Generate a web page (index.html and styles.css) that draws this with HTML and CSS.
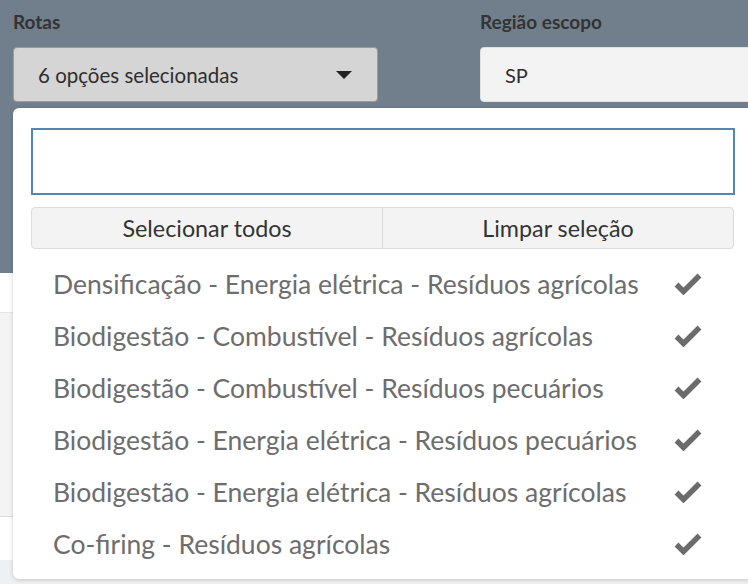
FILE: index.html
```html
<!DOCTYPE html>
<html lang="pt-BR">
<head>
<meta charset="utf-8">
<title>Rotas</title>
<link rel="stylesheet" href="styles.css">
</head>
<body>
  <header class="filters">
    <div class="field field-rotas">
      <label class="field-label">Rotas</label>
      <button class="select-btn" type="button">
        <span class="select-text">6 opções selecionadas</span>
        <span class="caret"></span>
      </button>
    </div>
    <div class="field field-regiao">
      <label class="field-label">Região escopo</label>
      <div class="text-input">SP</div>
    </div>
  </header>

  <main class="content">
    <div class="band band-white"></div>
    <div class="band band-grey"></div>
    <div class="band band-white2"></div>
    <div class="band band-foot"></div>
  </main>

  <div class="dropdown">
    <div class="search-box"></div>
    <div class="actions">
      <button class="action-btn" type="button">Selecionar todos</button>
      <button class="action-btn" type="button">Limpar seleção</button>
    </div>
    <ul class="options">
      <li class="option"><span>Densificação - Energia elétrica - Resíduos agrícolas</span><svg class="check" viewBox="0 0 28 22"><path d="M2.5 11.5 L9.5 18.5 L25.5 2.5"/></svg></li>
      <li class="option"><span>Biodigestão - Combustível - Resíduos agrícolas</span><svg class="check" viewBox="0 0 28 22"><path d="M2.5 11.5 L9.5 18.5 L25.5 2.5"/></svg></li>
      <li class="option"><span>Biodigestão - Combustível - Resíduos pecuários</span><svg class="check" viewBox="0 0 28 22"><path d="M2.5 11.5 L9.5 18.5 L25.5 2.5"/></svg></li>
      <li class="option"><span>Biodigestão - Energia elétrica - Resíduos pecuários</span><svg class="check" viewBox="0 0 28 22"><path d="M2.5 11.5 L9.5 18.5 L25.5 2.5"/></svg></li>
      <li class="option"><span>Biodigestão - Energia elétrica - Resíduos agrícolas</span><svg class="check" viewBox="0 0 28 22"><path d="M2.5 11.5 L9.5 18.5 L25.5 2.5"/></svg></li>
      <li class="option"><span>Co-firing - Resíduos agrícolas</span><svg class="check" viewBox="0 0 28 22"><path d="M2.5 11.5 L9.5 18.5 L25.5 2.5"/></svg></li>
    </ul>
  </div>
</body>
</html>
```
FILE: styles.css
```css
* { box-sizing: border-box; }

html, body {
  margin: 0;
  padding: 0;
  width: 748px;
  height: 584px;
  overflow: hidden;
  font-family: "Lato", "Liberation Sans", sans-serif;
  color: #333;
}

body { position: relative; background: #eef1f4; }

.filters {
  height: 273px;
  background: #717f8d;
  display: flex;
  gap: 102px;
  padding: 10px 0 0 13px;
}

.field { display: flex; flex-direction: column; flex: 0 0 365px; }

.field-label {
  font-weight: 700;
  font-size: 19px;
  line-height: 23px;
  color: #333;
  margin-bottom: 14px;
}

.select-btn {
  height: 55px;
  display: flex;
  align-items: center;
  justify-content: space-between;
  padding: 0 25px 0 24px;
  background: #d5d5d5;
  border: 1px solid #9b9b9b;
  border-radius: 4px;
  font-family: inherit;
  font-size: 20.5px;
  color: #2e2e2e;
}

.caret {
  width: 0;
  height: 0;
  border-left: 8px solid transparent;
  border-right: 8px solid transparent;
  border-top: 8px solid #222;
}

.text-input {
  height: 55px;
  display: flex;
  align-items: center;
  padding: 0 24px;
  background: #f3f3f3;
  border: 1px solid #e0e0e0;
  border-radius: 4px;
  font-size: 20px;
  color: #2e2e2e;
}

.content { display: flex; flex-direction: column; }
.band-white { height: 40px; background: #fff; border-bottom: 1px solid #e6e6e6; }
.band-grey { height: 204px; background: #f4f4f4; border-bottom: 1px solid #dcdcdc; }
.band-white2 { height: 43px; background: #fff; }
.band-foot { height: 30px; background: #eef1f4; }

.dropdown {
  position: absolute;
  top: 108px;
  left: 13px;
  width: 740px;
  height: 471px;
  background: #fff;
  border-radius: 6px;
  box-shadow: 0 1px 4px rgba(0, 0, 0, 0.18);
  padding: 20px 18px 8px 18px;
}

.search-box {
  height: 67px;
  border: 2px solid #4f88b6;
  background: #fff;
}

.actions {
  margin-top: 12px;
  height: 42px;
  display: flex;
  margin-right: 1px;
  border: 1px solid #dcdcdc;
  border-radius: 4px;
  background: #f3f3f3;
  overflow: hidden;
}

.action-btn {
  flex: 1;
  border: 0;
  background: transparent;
  font-family: inherit;
  font-size: 23.3px;
  color: #333;
  padding: 0;
}
.action-btn + .action-btn { border-left: 1px solid #dcdcdc; }

.options {
  list-style: none;
  margin: 10px 0 0 0;
  padding: 0;
}

.option {
  height: 52px;
  display: flex;
  align-items: center;
  justify-content: space-between;
  padding: 0 33px 2px 22px;
  font-size: 26.5px;
  color: #6d6d6d;
}

.check {
  width: 28px;
  height: 22px;
  fill: none;
  stroke: #6b6b6b;
  stroke-width: 5.5;
  stroke-linejoin: miter;
  stroke-linecap: butt;
}
```
